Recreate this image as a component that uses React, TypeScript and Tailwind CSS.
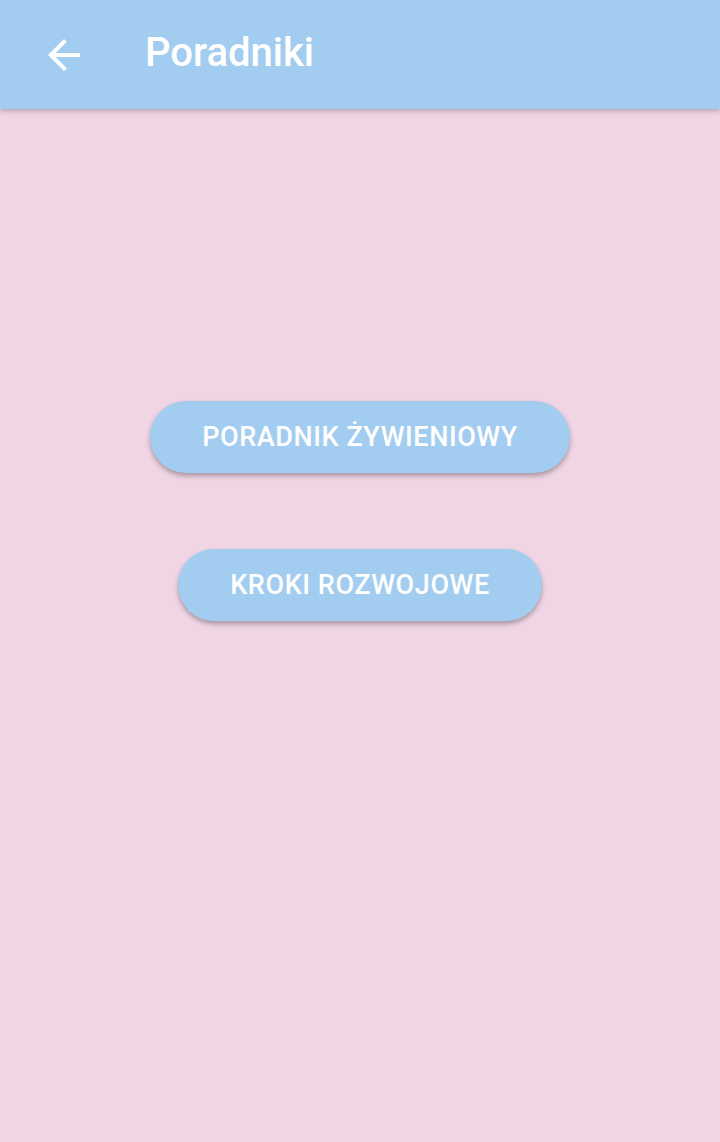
const guides = ["PORADNIK ŻYWIENIOWY", "KROKI ROZWOJOWE"];

export default function App() {
  return (
    <div className="w-[720px] h-[1142px] bg-[#f0d6e5] flex flex-col font-['Roboto',sans-serif]">
      <header className="h-[109px] bg-[#a3cdf0] flex items-center shrink-0 shadow-[0_2px_5px_rgba(0,0,0,0.25)] relative z-10">
        <button className="w-[48px] h-[48px] ml-[40px] flex items-center justify-center">
          <svg viewBox="0 0 24 24" className="w-[48px] h-[48px]" fill="#ffffff">
            <path d="M20 11H7.83l5.59-5.59L12 4l-8 8 8 8 1.41-1.41L7.83 13H20v-2z" />
          </svg>
        </button>
        <h1 className="ml-[57px] text-white text-[40px] font-medium leading-none pb-[3px]">
          Poradniki
        </h1>
      </header>
      <main className="flex flex-col items-center pt-[292px] gap-[76px]">
        {guides.map((label) => (
          <button
            key={label}
            className="h-[72px] px-[52px] rounded-full bg-[#a3cdf0] text-white text-[27px] font-medium tracking-[0.6px] shadow-[0_3px_5px_rgba(0,0,0,0.3)]"
          >
            {label}
          </button>
        ))}
      </main>
    </div>
  );
}
